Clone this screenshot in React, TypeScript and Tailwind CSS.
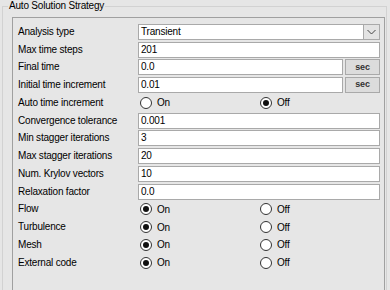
import React from 'react'

type Row =
  | { kind: 'select'; label: string; value: string }
  | { kind: 'text'; label: string; value: string; unit?: string }
  | { kind: 'radio'; label: string; on: boolean }

const rows: Row[] = [
  { kind: 'select', label: 'Analysis type', value: 'Transient' },
  { kind: 'text', label: 'Max time steps', value: '201' },
  { kind: 'text', label: 'Final time', value: '0.0', unit: 'sec' },
  { kind: 'text', label: 'Initial time increment', value: '0.01', unit: 'sec' },
  { kind: 'radio', label: 'Auto time increment', on: false },
  { kind: 'text', label: 'Convergence tolerance', value: '0.001' },
  { kind: 'text', label: 'Min stagger iterations', value: '3' },
  { kind: 'text', label: 'Max stagger iterations', value: '20' },
  { kind: 'text', label: 'Num. Krylov vectors', value: '10' },
  { kind: 'text', label: 'Relaxation factor', value: '0.0' },
  { kind: 'radio', label: 'Flow', on: true },
  { kind: 'radio', label: 'Turbulence', on: true },
  { kind: 'radio', label: 'Mesh', on: true },
  { kind: 'radio', label: 'External code', on: true },
]

const Radio = ({ checked, label }: { checked: boolean; label: string }) => (
  <div className="flex items-center">
    <span className="flex h-[12px] w-[12px] items-center justify-center rounded-full border border-[#333] bg-white">
      {checked && <span className="h-[6px] w-[6px] rounded-full bg-[#111]" />}
    </span>
    <span className="ml-[5px]">{label}</span>
  </div>
)

const Field = ({ row }: { row: Row }) => {
  if (row.kind === 'radio') {
    return (
      <div className="flex h-full items-center pl-[2px]">
        <div className="w-[120px]">
          <Radio checked={row.on} label="On" />
        </div>
        <Radio checked={!row.on} label="Off" />
      </div>
    )
  }
  if (row.kind === 'select') {
    return (
      <div className="flex h-[16px] items-stretch border border-[#a9a9a9] bg-white">
        <span className="flex-1 pl-[2px] leading-[14px]">{row.value}</span>
        <span className="flex w-[16px] items-center justify-center border-l border-[#a9a9a9] bg-[#e3e3e3]">
          <svg width="9" height="6" viewBox="0 0 9 6">
            <path d="M0.5 1 L4.5 5 L8.5 1" fill="none" stroke="#444" strokeWidth="1" />
          </svg>
        </span>
      </div>
    )
  }
  return (
    <div className="flex items-stretch gap-[2px]">
      <span className="h-[16px] flex-1 border border-[#a9a9a9] bg-white pl-[2px] leading-[14px]">{row.value}</span>
      {row.unit && (
        <span className="flex h-[16px] w-[35px] items-center justify-center border border-[#a9a9a9] bg-[#dcdcdc] text-[9px] font-bold text-[#333]">
          {row.unit}
        </span>
      )}
    </div>
  )
}

export default function App() {
  return (
    <div className="relative h-[290px] w-[390px] overflow-hidden bg-[#e6e6e6] text-[10px] tracking-[-0.2px] text-black [font-family:'Liberation_Sans',Arial,sans-serif]">
      <div className="relative ml-[2px] mr-[3px] mt-[6px] h-[300px] border-l border-r border-t border-[#d2d2d2]">
        <span className="absolute left-[5px] top-[-7px] bg-[#e6e6e6] px-[1px] leading-[12px]">
          Auto Solution Strategy
        </span>
        <div className="ml-[9px] mr-[1px] mt-[10px] h-[300px] border-l border-r border-t border-[#a0a0a0] pl-[5px] pr-[4px] pt-[5px]">
          <div className="grid grid-cols-[120px_1fr] auto-rows-[17.75px] items-center">
            {rows.map((row) => (
              <React.Fragment key={row.label}>
                <span className="leading-[12px]">{row.label}</span>
                <Field row={row} />
              </React.Fragment>
            ))}
          </div>
        </div>
      </div>
    </div>
  )
}
